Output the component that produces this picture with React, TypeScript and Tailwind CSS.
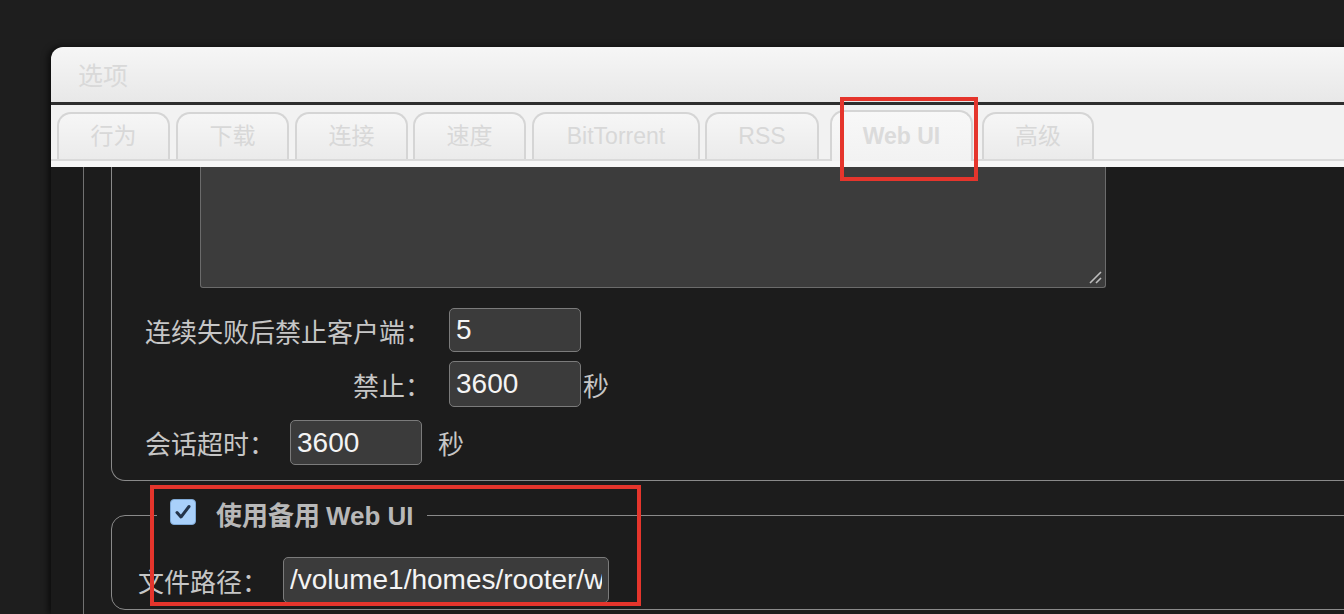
import { useState } from 'react'

const tabs = [
  { label: '行为', cls: 'w-[113px] ml-[6px]' },
  { label: '下载', cls: 'w-[113px] ml-[6px]' },
  { label: '连接', cls: 'w-[113px] ml-[6px]' },
  { label: '速度', cls: 'w-[113px] ml-[5px]' },
  { label: 'BitTorrent', cls: 'w-[168px] ml-[6px]' },
  { label: 'RSS', cls: 'w-[114px] ml-[5px]' },
  { label: 'Web UI', cls: 'w-[143px] ml-[11px]', active: true },
  { label: '高级', cls: 'w-[112px] ml-[9px]' },
]

function Field({ value, className }: { value: string; className: string }) {
  return (
    <input
      readOnly
      value={value}
      className={`${className} bg-[#3b3b3b] border border-[#7b7b7b] rounded-[5px] px-[6px] text-[28px] text-[#f4f4f4] font-['Liberation_Sans',sans-serif] outline-none`}
    />
  )
}

export default function App() {
  const [altUi, setAltUi] = useState(true)

  return (
    <div className="relative w-[1344px] h-[614px] overflow-hidden bg-[#1e1e1e] font-['Noto_Sans_CJK_SC',sans-serif]">
      <div className="pt-[47px] pl-[51px]">
        <div className="w-[1400px] rounded-tl-[12px] overflow-hidden shadow-[-3px_0_6px_rgba(0,0,0,0.6)]">
          {/* title bar */}
          <div className="h-[55px] bg-gradient-to-b from-[#f6f6f6] to-[#e8e8e8] flex items-center pl-[27px] text-[25px] text-[#d9d9d9]">
            选项
          </div>
          <div className="h-[3px] bg-[#2e2e2e]" />

          {/* tabs */}
          <div className="h-[62px] bg-[#f2f2f2] flex flex-col">
            <div className="h-[56px] flex items-end border-b-[2px] border-[#dadada]">
              {tabs.map((t) => (
                <div
                  key={t.label}
                  className={`${t.cls} ${
                    t.active
                      ? 'h-[51px] -mb-[2px] bg-gradient-to-b from-[#f8f8f8] to-[#f2f2f2] font-bold text-[#dbdbdb]'
                      : 'h-[47px] bg-gradient-to-b from-[#f6f6f6] to-[#ebebeb] text-[#d8d8d8]'
                  } rounded-t-[14px] border-2 border-b-0 border-[#d5d5d5] flex items-center justify-center text-[23px] font-['Liberation_Sans','Noto_Sans_CJK_SC',sans-serif]`}
                >
                  {t.label}
                </div>
              ))}
            </div>
            <div className="flex-1 bg-[#f6f6f6]" />
          </div>

          {/* content */}
          <div className="h-[447px] bg-[#1c1c1c] flex">
            <div className="w-[33px] bg-[#1a1a1a] border-r border-[#717171]" />
            <div className="pl-[27px] text-[#c6c6c6] text-[26px]">
              {/* fieldset 1 (top scrolled away) */}
              <div className="w-[1300px] border-l border-b border-[#8a8a8a] rounded-bl-[14px] pb-[15px]">
                <div className="relative ml-[88px] w-[906px] h-[121px] bg-[#3c3c3c] border border-t-0 border-[#6b6b6b] rounded-b-[3px]">
                  <svg className="absolute right-[3px] bottom-[3px]" width="14" height="14" viewBox="0 0 14 14">
                    <path d="M2 13 L13 2 M8 13 L13 8" stroke="#bdbdbd" strokeWidth="1.6" />
                  </svg>
                </div>

                <div className="pl-[33px]">
                  <div className="mt-[20px] flex items-center h-[44px]">
                    <span className="w-[304px] text-right pr-[18px]">连续失败后禁止客户端：</span>
                    <Field value="5" className="w-[132px] h-[44px]" />
                  </div>
                  <div className="mt-[9px] flex items-center h-[46px]">
                    <span className="w-[304px] text-right pr-[18px]">禁止：</span>
                    <Field value="3600" className="w-[132px] h-[46px]" />
                    <span className="ml-[2px]">秒</span>
                  </div>
                  <div className="mt-[13px] flex items-center h-[45px]">
                    <span className="mr-[15px]">会话超时：</span>
                    <Field value="3600" className="w-[132px] h-[45px]" />
                    <span className="ml-[16px]">秒</span>
                  </div>
                </div>
              </div>

              {/* fieldset 2 */}
              <fieldset className="mt-[19px] w-[1300px] border border-[#8a8a8a] rounded-l-[14px] pl-[26px] pb-[6px]">
                <legend className="ml-[19px] px-[13px]">
                  <label className="flex items-center h-[30px] cursor-pointer">
                    <button
                      onClick={() => setAltUi(!altUi)}
                      className="w-[26px] h-[26px] rounded-[4px] bg-[#a9d0fa] border border-[#7fa9d6] flex items-center justify-center mr-[20px] -mt-[6px]"
                    >
                      {altUi && (
                        <svg width="18" height="18" viewBox="0 0 18 18">
                          <path d="M3 9.5 L7 14 L15 3.5" fill="none" stroke="#24344a" strokeWidth="3" strokeLinecap="round" strokeLinejoin="round" />
                        </svg>
                      )}
                    </button>
                    <span className="font-bold text-[#b8b8b8] text-[26px]">
                      使用备用 <span className="font-['Liberation_Sans',sans-serif]">Web UI</span>
                    </span>
                  </label>
                </legend>
                <div className="mt-[27px] flex items-center h-[46px]">
                  <span className="mr-[15px]">文件路径：</span>
                  <Field value="/volume1/homes/rooter/webui" className="w-[326px] h-[46px]" />
                </div>
              </fieldset>
            </div>
          </div>
        </div>
      </div>

      {/* red annotation boxes */}
      <div className="absolute left-[840px] top-[97px] w-[138px] h-[84px] border-[4px] border-[#e5352c]" />
      <div className="absolute left-[150px] top-[485px] w-[491px] h-[121px] border-[4px] border-[#e5352c]" />
    </div>
  )
}
